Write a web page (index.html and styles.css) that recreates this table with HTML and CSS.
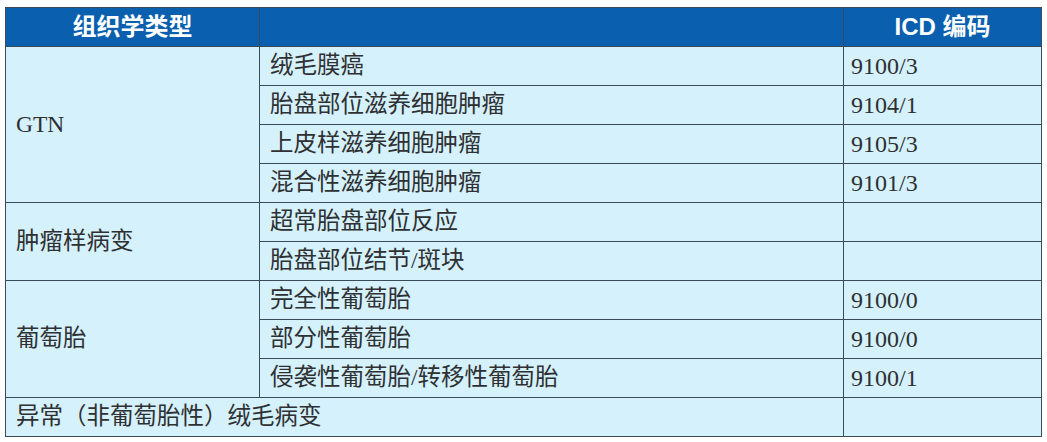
FILE: index.html
```html
<!DOCTYPE html>
<html lang="zh">
<head>
<meta charset="utf-8">
<link rel="stylesheet" href="styles.css">
</head>
<body>
<table class="grid">
  <colgroup>
    <col class="c1"><col class="c2"><col class="c3">
  </colgroup>
  <thead>
    <tr class="head">
      <th>组织学类型</th>
      <th></th>
      <th>ICD 编码</th>
    </tr>
  </thead>
  <tbody>
    <tr><td rowspan="4" class="group">GTN</td><td>绒毛膜癌</td><td class="code">9100/3</td></tr>
    <tr><td>胎盘部位滋养细胞肿瘤</td><td class="code">9104/1</td></tr>
    <tr><td>上皮样滋养细胞肿瘤</td><td class="code">9105/3</td></tr>
    <tr><td>混合性滋养细胞肿瘤</td><td class="code">9101/3</td></tr>
    <tr><td rowspan="2" class="group">肿瘤样病变</td><td>超常胎盘部位反应</td><td class="code"></td></tr>
    <tr><td>胎盘部位结节/斑块</td><td class="code"></td></tr>
    <tr><td rowspan="3" class="group">葡萄胎</td><td>完全性葡萄胎</td><td class="code">9100/0</td></tr>
    <tr><td>部分性葡萄胎</td><td class="code">9100/0</td></tr>
    <tr><td>侵袭性葡萄胎/转移性葡萄胎</td><td class="code">9100/1</td></tr>
    <tr><td colspan="2" class="group">异常（非葡萄胎性）绒毛病变</td><td class="code"></td></tr>
  </tbody>
</table>
</body>
</html>
```

FILE: styles.css
```css
html, body {
  margin: 0;
  padding: 0;
  background: #ffffff;
}
body {
  padding: 7px 0 0 5px;
}
.grid {
  border-collapse: collapse;
  table-layout: fixed;
  width: 1036px;
  font-family: "Liberation Serif", "Noto Sans CJK SC", serif;
  font-size: 23.5px;
  color: #2e3032;
}
.c1 { width: 254px; }
.c2 { width: 584px; }
.c3 { width: 198px; }
.grid th,
.grid td {
  border: 1.5px solid #3b4a58;
  height: 39px;
  padding: 0;
  box-sizing: border-box;
  vertical-align: middle;
  line-height: 1;
}
.head th {
  background: #0a5fae;
  color: #ffffff;
  font-family: "Liberation Sans", "Noto Sans CJK SC", sans-serif;
  font-weight: bold;
  font-size: 24px;
  text-align: center;
  height: 39px;
}
.grid td {
  background: #d5f1fc;
  padding-left: 10px;
  text-align: left;
}
.grid td.group {
  padding-left: 10px;
}
.grid td.code {
  padding-left: 7px;
  font-size: 24px;
}
```
